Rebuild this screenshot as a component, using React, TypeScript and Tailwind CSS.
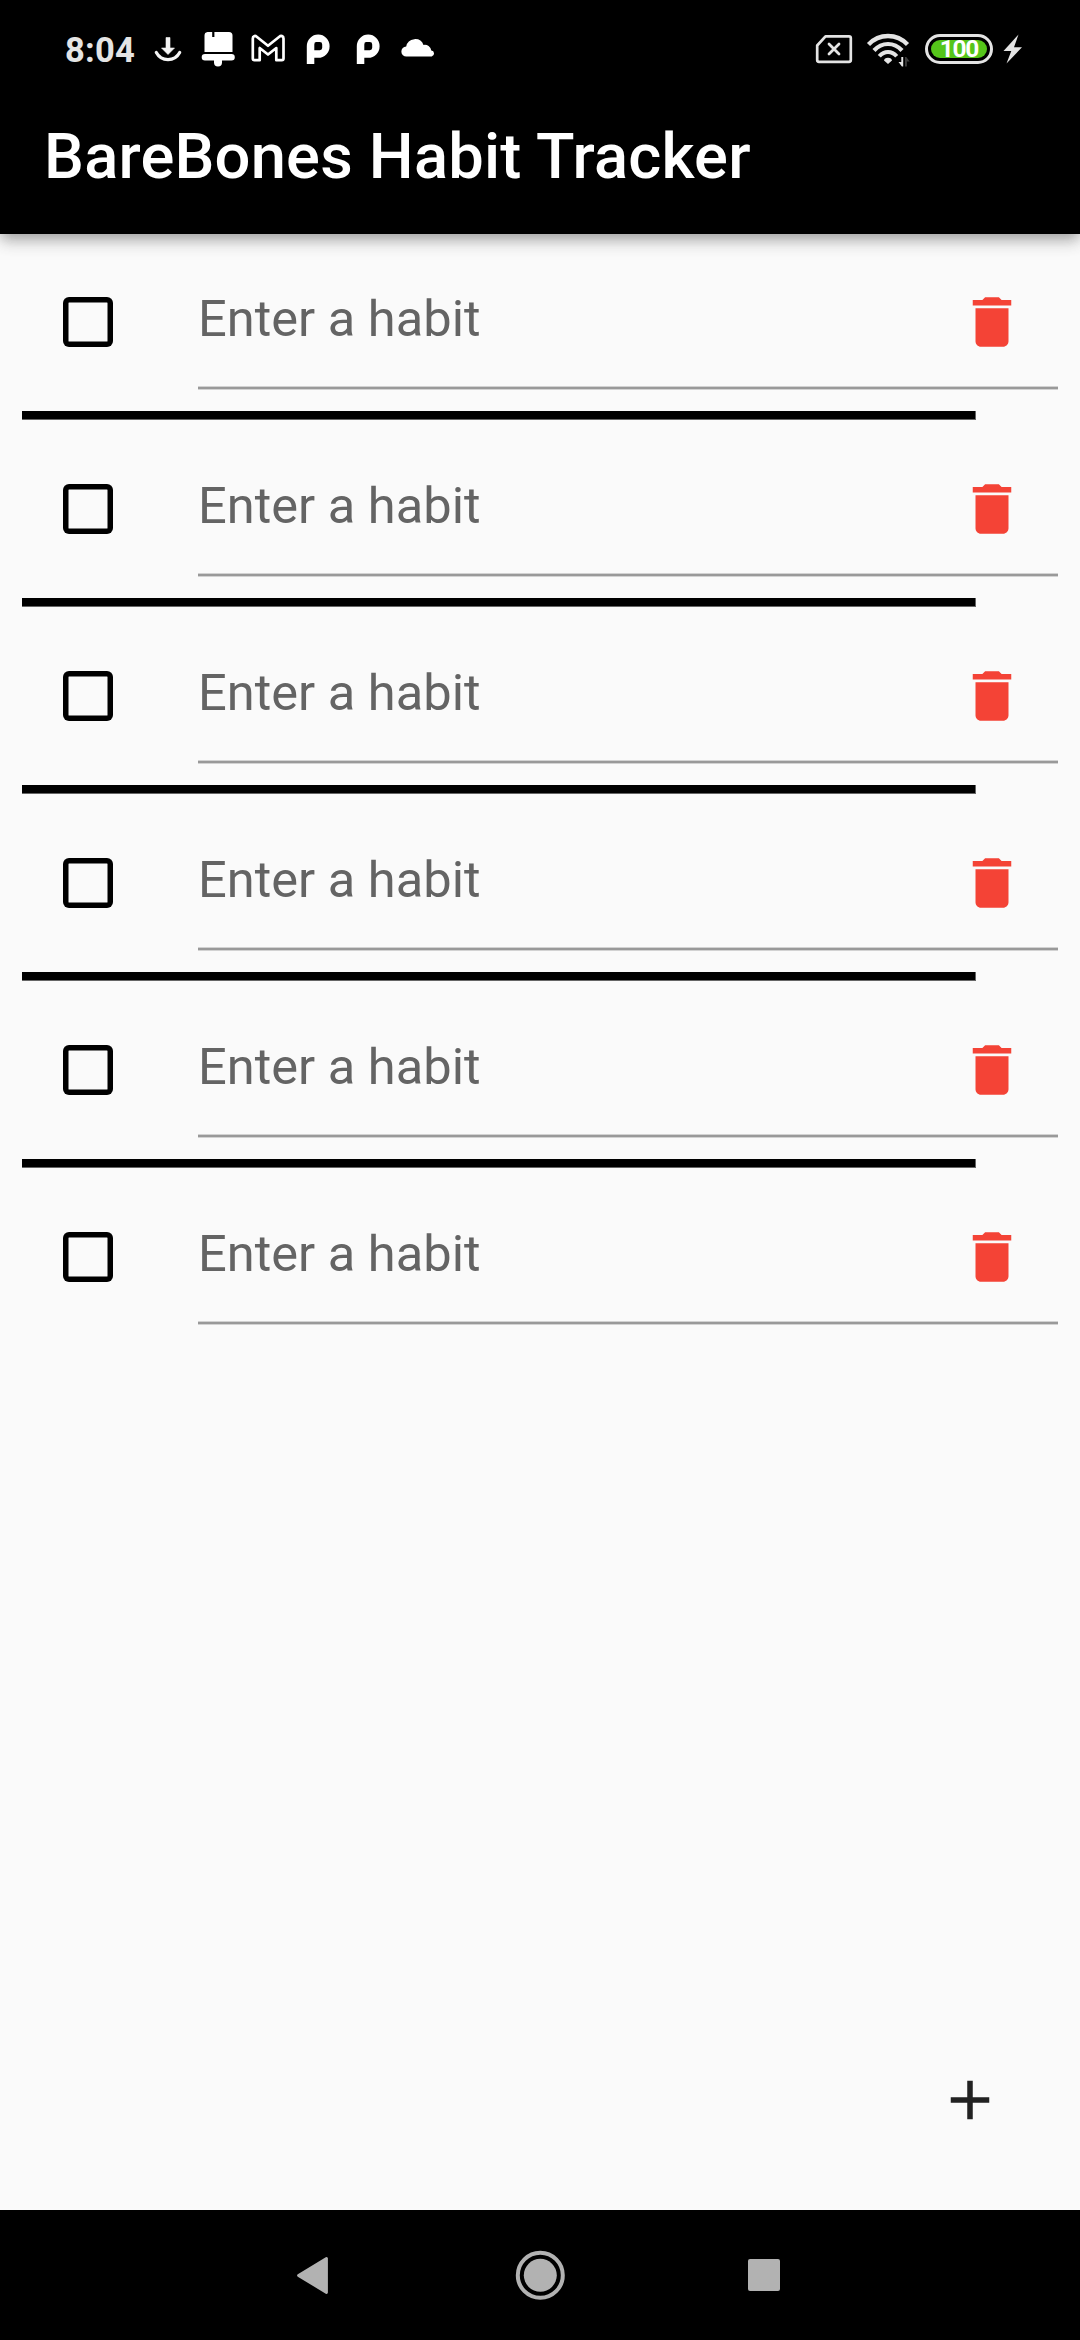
import type { ReactNode } from "react";

const HABITS = [1, 2, 3, 4, 5, 6];

/* Each glyph's viewBox is given in screen pixels so one unit is one pixel. */
function Glyph({ box, className, children }: { box: string; className?: string; children: ReactNode }) {
  const [, , w, h] = box.split(" ");
  return (
    <svg viewBox={box} width={w} height={h} fill="none" className={"shrink-0 " + (className ?? "")}>
      {children}
    </svg>
  );
}

function StatusBar() {
  return (
    <div className="flex h-20 items-start text-[#e4e4e4]">
      <span className="ml-[65px] mt-[30px] w-[83px] whitespace-nowrap text-[34.5px] leading-[40px] font-bold tracking-[0.2px]">8:04</span>
      <Glyph box="148 24 40 50" className="mt-6">
        <path d="M166 37.5h4v10.5h4.5L168 54.5 161.500 48h4.5z" fill="#f4f4f4" stroke="#f4f4f4" strokeWidth="0.6" strokeLinejoin="round" />
        <path d="M156.300 52.500C159 57.500 163 59.600 168 59.600S177 57.500 179.700 52.500" stroke="#f4f4f4" strokeWidth="3.200" strokeLinecap="round" />
      </Glyph>
      <Glyph box="188 24 50 50" className="mt-6">
        <path d="M207.500 32h4.700v5h2.200v-5H229a3.500 3.500 0 0 1 3.500 3.500V52H204.500V35.500A3.500 3.500 0 0 1 207.500 32z" fill="#fff" />
        <path d="M205 54h26.500a3.200 3.200 0 0 1 0 6.600H222v2a4 4 0 0 1-8 0v-2h-9a3.300 3.300 0 0 1 0-6.600z" fill="#fff" />
      </Glyph>
      <Glyph box="238 24 56 50" className="mt-6">
        <path d="M252.800 58.500V38.500C252.800 36 255 35.300 256.700 36.700L268 45.800l11.300-9.100c1.700-1.400 4.200-.7 4.200 1.800v20c0 1-.7 1.700-1.700 1.700h-5.500V48L268 54.500l-8.300-6.500v12.200H254.500c-1 0-1.700-.7-1.700-1.700z" stroke="#fff" strokeWidth="2.700" strokeLinejoin="round" />
      </Glyph>
      {[0, 1].map((i) => (
        <Glyph key={i} box="294 24 50 50" className="mt-6">
          <path fillRule="evenodd" d="M306.800 64V46.200a11.400 11.600 0 1 1 11.400 11.600h-3.900V64zM316.200 42h3.600q2.400 0 2.400 2.400v3.400q0 2.400-2.400 2.400h-5.500v-5.800q0-2.400 1.900-2.400z" fill="#fff" />
        </Glyph>
      ))}
      <Glyph box="394 24 48 50" className="mt-6">
        <path d="M406.500 56.500a5 5 0 0 1-.3-10 9 9 0 0 1 17.300-1.500 6.500 6.500 0 0 1 7.800 5.500 3.050 3.050 0 0 1 .4 6z" fill="#fff" />
      </Glyph>
      <div className="flex-1" />
      <Glyph box="810 24 50 50" className="mt-6">
        <path d="M825.500 36.300H849a1.800 1.800 0 0 1 1.800 1.800v22a1.800 1.800 0 0 1-1.800 1.800H819a1.800 1.800 0 0 1-1.800-1.800V45.500z" stroke="#e4e4e4" strokeWidth="2.700" strokeLinejoin="round" />
        <path d="M829 44l10 10M839 44l-10 10" stroke="#e4e4e4" strokeWidth="2.800" strokeLinecap="round" />
      </Glyph>
      <Glyph box="860 24 60 50" className="mt-6">
        <path d="M868.500 44.500Q876.500 36 888 36T907.500 44.500" stroke="#e4e4e4" strokeWidth="4.300" />
        <path d="M874 50.500Q880 44 888 44T902 50.500" stroke="#e4e4e4" strokeWidth="4.200" />
        <path d="M879.300 56.300Q883 52 888 52T896.700 56.300" stroke="#e4e4e4" strokeWidth="4" />
        <path d="M888 57.700c2.400 0 4 1.300 4 2.900L888 64l-4-3.400c0-1.600 1.600-2.900 4-2.900z" fill="#e4e4e4" />
        <path d="M901.300 57h1.900v9.500h-1.300L898.500 62h2.800z" fill="#e4e4e4" />
        <path d="M905 66.500V57h1.300l3.400 4.500h-2.800v5z" fill="#3c3c3c" />
      </Glyph>
      <div className="ml-[5px] mt-[34px] flex h-[30px] w-[68px] items-center justify-center rounded-full border-[3px] border-[#e4e4e4]">
        <div className="flex h-[18px] w-[56px] items-center justify-center rounded-full bg-[#55c51a]">
          <span className="text-[24.5px] leading-[18px] font-bold tracking-[-1.3px] text-white">100</span>
        </div>
      </div>
      <Glyph box="993 24 87 50" className="mt-6">
        <path d="M1018.500 34.500L1003.500 51h7.800L1006.500 63.500 1022 47.300h-8z" fill="#e4e4e4" />
      </Glyph>
    </div>
  );
}

function HabitRow({ divided }: { divided: boolean }) {
  return (
    <li className="h-[187px]">
      <div className="flex h-[156px] px-[22px]">
        <button aria-label="Toggle habit" className="mt-[63.25px] ml-[41.25px] size-[49.5px] shrink-0 rounded-[6px] shadow-[inset_0_0_0_5.5px_#000]" />
        <div className="ml-[85.25px] flex h-full flex-1 border-b border-[#d2d2d2]">
          <div className="flex w-full justify-between border-b-2 border-[#999999] shadow-[inset_0_-1px_0_#d2d2d2]">
            <span className="mt-[55px] text-[50.6px] leading-[60px] text-[#646464]">Enter a habit</span>
            <svg viewBox="0 0 24 24" fill="#f44336" className="mt-[55px] mr-[33px] size-[66px]">
              <path d="M6 19c0 1.100.9 2 2 2h8c1.100 0 2-.9 2-2V7H6v12zM19 4h-3.500l-1-1h-5l-1 1H5v2h14V4z" />
            </svg>
          </div>
        </div>
      </div>
      {divided && <div className="mt-[21px] ml-[22px] h-[9px] w-[954px] border-r border-b border-[#666666] bg-black" />}
    </li>
  );
}

export default function App() {
  return (
    <div className="flex h-[2340px] w-[1080px] flex-col overflow-hidden bg-[#fafafa] font-[Roboto,sans-serif]">
      <header className="h-[234px] shrink-0 bg-black shadow-[0_5px_11px_-3px_rgba(0,0,0,0.2),0_9px_14px_0_rgba(0,0,0,0.14),0_3px_20px_0_rgba(0,0,0,0.12)]">
        <StatusBar />
        <h1 className="flex h-[154px] items-center pl-[44px] text-[63.25px] leading-none font-medium tracking-[0.2px] whitespace-nowrap text-white">
          BareBones Habit Tracker
        </h1>
      </header>
      <main className="flex flex-1 flex-col">
        <ul className="flex flex-col">
          {HABITS.map((id, i) => (
            <HabitRow key={id} divided={i < HABITS.length - 1} />
          ))}
        </ul>
        <button aria-label="Add habit" className="mt-auto mr-[77px] mb-[77px] self-end">
          <svg viewBox="0 0 24 24" fill="#212121" className="size-[66px]">
            <path d="M19 13h-6v6h-2v-6H5v-2h6V5h2v6h6v2z" />
          </svg>
        </button>
      </main>
      <nav className="flex h-[130px] shrink-0 items-start bg-black">
        <Glyph box="290 2250 50 50" className="ml-[290px] mt-10">
          <path d="M326.500 2258.500v34L298.500 2275.500z" fill="#b2b2b2" stroke="#b2b2b2" strokeWidth="2.800" strokeLinejoin="round" />
        </Glyph>
        <Glyph box="510 2245 60 60" className="ml-[170px] mt-[35px]">
          <circle cx="540.300" cy="2275.300" r="22.500" stroke="#b2b2b2" strokeWidth="4" />
          <circle cx="540.300" cy="2275.300" r="16.500" fill="#b2b2b2" />
        </Glyph>
        <div className="ml-[178px] mt-[49px] size-8 rounded-[2px] bg-[#b2b2b2]" />
      </nav>
    </div>
  );
}
